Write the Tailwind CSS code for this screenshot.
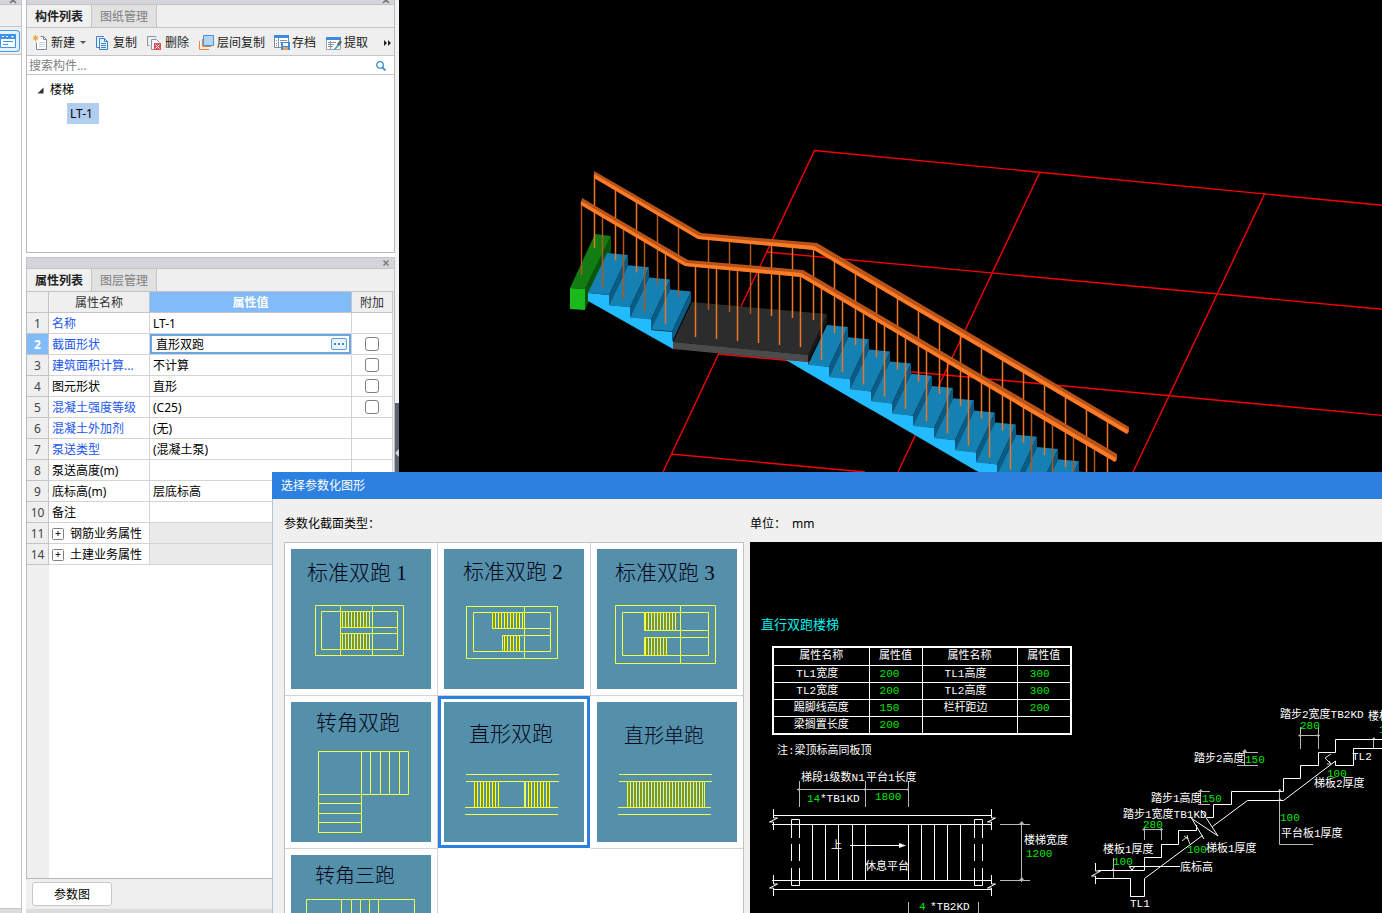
<!DOCTYPE html>
<html lang="zh-CN">
<head>
    <meta charset="UTF-8">
    <meta name="viewport" content="width=device-width, initial-scale=1.0">
    <title>选择参数化图形</title>
    <script src="https://cdn.jsdelivr.net/npm/@tailwindcss/browser@4"></script>
</head>
<body class="relative flex h-screen overflow-hidden bg-white font-['Noto_Sans','Noto_Sans_CJK_SC',sans-serif] text-xs text-[#222]">

    <!-- collapsed dock on the far left -->
    <aside class="flex w-[22px] shrink-0 flex-col border-r border-[#c4c4c8]">
        <div class="h-[5px] overflow-hidden border-b border-[#c4c4c8] bg-[#d4d4da] text-right"><svg class="ml-auto mr-1 block" width="8" height="4" viewBox="0 4 8 4"><path d="M1 1l6 6M7 1L1 7" stroke="#777" stroke-width="1.5"/></svg></div>
        <div class="h-[22px] border-b border-[#c4c4c8] bg-[#efefef]"></div>
        <div class="h-7 border-b border-[#c4c4c8] bg-[#efefef] pt-[3px]">
            <button type="button" aria-label="面板" class="flex h-[22px] w-5 items-center rounded-r border border-l-0 border-[#4a9be8] bg-[#e4f1fd]">
                <svg width="17" height="14" viewBox="0 0 17 14"><path d="M.5.5h15v13H.5z" fill="#fff" stroke="#3d94e8"/><path d="M0 0h16v5H0z" fill="#3d94e8"/><path d="M2 2h2v1H2zM6 2h2v1H6zM11 2h3l-1.500 2z" fill="#fff"/><path d="M3 7.500h10M3 10.500h5" stroke="#3d94e8"/></svg>
            </button>
        </div>
        <div class="flex-1 bg-white"></div>
        <div class="h-[5px] border-t border-[#c4c4c8] bg-[#dcdcdc]"></div>
    </aside>

    <div class="flex w-[373px] shrink-0 flex-col pl-1">
        <!-- component list -->
        <section class="flex h-[253px] shrink-0 flex-col border-x border-b border-[#b8b8bc]">
            <div class="h-[5px] shrink-0 border-b border-[#c4c4c8] bg-[#d4d4da]"><svg class="ml-auto mr-1 block" width="8" height="4" viewBox="0 4 8 4"><path d="M1 1l6 6M7 1L1 7" stroke="#777" stroke-width="1.5"/></svg></div>
            <div class="flex h-[23px] shrink-0 border-b border-[#c4c4c8] bg-[#efefef] leading-5">
                <button type="button" class="w-[65px] border-r border-[#c4c4c8] bg-[#f0f0f0] pt-[2px] font-bold">构件列表</button>
                <button type="button" class="w-[65px] border-r border-[#c4c4c8] bg-[#e1e1e1] pt-[2px] text-[#808080]">图纸管理</button>
            </div>
            <div class="flex h-7 shrink-0 items-center gap-[10px] border-b border-[#c4c4c8] bg-[#efefef] pt-[2px] pl-[6px]">
                <button type="button" class="flex items-center gap-[2px] whitespace-nowrap">
                    <svg width="16" height="16" viewBox="0 0 16 16"><path d="M7.500 1.500h3l3 3v10h-10v-7" fill="#fff" stroke="#7d8a94"/><path d="M10.500 1.500v3h3" fill="none" stroke="#7d8a94"/><path d="M6 7.500h6M6 9.500h6M6 11.500h6" stroke="#cdd3d8"/><path d="M.5 1l4 4M4.500 1l-4 4M2.500 0v6M0 3h5.500" stroke="#f29b28"/></svg>新建
                    <svg class="ml-[3px]" width="6" height="4" viewBox="0 0 6 4"><path d="M0 0h6L3 3z" fill="#555"/></svg>
                </button>
                <button type="button" class="-ml-px flex items-center gap-[2px] whitespace-nowrap">
                    <svg width="16" height="16" viewBox="0 0 16 16"><path d="M9 1.500H1.500v11H4" fill="none" stroke="#3b82d0"/><path d="M4.500 3.500h5l3 3v8h-8z" fill="#e6f1fc" stroke="#3b82d0"/><path d="M9.500 3.500v3h3" fill="none" stroke="#3b82d0"/><path d="M6 8.500h5M6 10.500h5M6 12.500h5" stroke="#3b82d0"/></svg>复制
                </button>
                <button type="button" class="flex items-center gap-[2px] whitespace-nowrap">
                    <svg width="16" height="16" viewBox="0 0 16 16"><path d="M2.500 10.500h-2v-9h8v1" fill="none" stroke="#8a949c"/><path d="M8 14.500H4.500v-10h5l3 3" fill="#fff" stroke="#8a949c"/><path d="M7 8h7v7H7z" fill="#d9505a"/><path d="M8.500 9.500l4 4M12.500 9.500l-4 4" stroke="#fff"/></svg>删除
                </button>
                <button type="button" class="flex items-center gap-[2px] whitespace-nowrap">
                    <svg width="16" height="16" viewBox="0 0 16 16"><path d="M.5 6v8.500H10M3.500 4v7.500H12" fill="none" stroke="#f08030"/><path d="M4.500.5h10v10h-10z" fill="#b5d6fa" stroke="#4a90e2"/></svg>层间复制
                </button>
                <button type="button" class="-ml-px flex items-center gap-[2px] whitespace-nowrap">
                    <svg width="16" height="16" viewBox="0 0 16 16"><path d="M.5.5h14v12H.5z" fill="#fff" stroke="#7d8a94"/><path d="M0 0h15v3H0z" fill="#3d8be0"/><path d="M4.500 3v9M2 5.500h1M2 8.500h1M2 10.500h1M6 5.500h7M6 7.500h2" stroke="#8a949c"/><path d="M7 7h9v8H7z" fill="#3d8be0"/><path d="M9 8h5v3H9z" fill="#fff"/><path d="M9 12h5v3H9z" fill="#e4a060"/></svg>存档
                </button>
                <button type="button" class="flex items-center gap-[2px] whitespace-nowrap">
                    <svg width="16" height="16" viewBox="0 0 16 16"><path d="M.5 2.500h14v12H.5z" fill="#fff" stroke="#9aa4ac"/><path d="M0 2h15v3H0z" fill="#3d8be0"/><path d="M2 7.500h8M2 9.500h6M2 11.500h5M4.500 6v8" stroke="#8a949c"/><path d="M8 14l4-5 1.500 1.500L9 15z" fill="#35a8c8"/><path d="M11 9l3-4 2 2-3 4z" fill="#666"/></svg>提取
                </button>
                <button type="button" aria-label="更多" class="ml-[6px]"><svg width="8" height="6" viewBox="0 0 8 6"><path d="M0 0l3 3-3 3zM4 0l3 3-3 3z" fill="#222"/></svg></button>
            </div>
            <label class="flex h-[19px] shrink-0 items-center border-b border-[#c4c4c8] bg-white pt-[2px] pl-[2px] pr-2">
                <input type="text" aria-label="搜索构件" placeholder="搜索构件..." class="min-w-0 flex-1 outline-none placeholder:text-[#808080]">
                <svg width="10" height="10" viewBox="0 0 10 10"><circle cx="4" cy="4" r="3.300" fill="none" stroke="#3c8fd0" stroke-width="1.300"/><path d="M6.500 6.500l3 3" stroke="#3c8fd0" stroke-width="1.800"/></svg>
            </label>
            <ul class="flex-1 bg-white pt-[5px] leading-5 text-black">
                <li>
                    <div class="flex items-center gap-[6px] pl-[10px]"><svg width="7" height="7" viewBox="0 0 7 7"><path d="M6.500.5v6h-6z" fill="#333"/></svg>楼梯</div>
                    <ul class="pt-[3px] pl-10"><li class="w-8 bg-[#b1cdef] pl-[3px] leading-[21px]">LT-1</li></ul>
                </li>
            </ul>
        </section>

        <!-- property list -->
        <section class="mt-1 flex min-h-0 flex-1 flex-col">
            <div class="flex h-3 shrink-0 items-center border border-[#c4c4c8] bg-[#d4d4da]"><svg class="ml-auto mr-1 block" width="8" height="8" viewBox="0 0 8 8"><path d="M1.500 1.500l5 5M6.500 1.500l-5 5" stroke="#777" stroke-width="1.400"/></svg></div>
            <div class="flex h-[23px] shrink-0 border border-t-0 border-[#c4c4c8] bg-[#efefef] leading-5">
                <button type="button" class="w-[65px] border-r border-[#c4c4c8] bg-[#f0f0f0] pt-[2px] font-bold">属性列表</button>
                <button type="button" class="w-[65px] border-r border-[#c4c4c8] bg-[#e1e1e1] pt-[2px] text-[#808080]">图层管理</button>
            </div>
            <div class="flex min-h-0 flex-1 flex-col border-x border-b border-[#b8b8bc] bg-[#efefef] pr-[1px]">
                <table class="w-[366px] table-fixed border-separate border-spacing-0 bg-white text-black [&_td]:h-[21px] [&_td]:border-r [&_td]:border-b [&_td]:border-[#d4d4d4] [&_td]:p-0 [&_td]:pt-[2px] [&_td]:pl-[3px] [&_td]:leading-[18px] [&_td]:whitespace-nowrap [&_td:last-child]:p-0 [&_th]:h-[21px] [&_th]:border-r [&_th]:border-b [&_th]:border-[#c4c4c8] [&_th]:p-0 [&_th]:pt-[2px] [&_th]:leading-[18px] [&_th]:font-normal">
                    <colgroup><col class="w-[22px]"><col class="w-[101px]"><col class="w-[202px]"><col class="w-[41px]"></colgroup>
                    <thead class="bg-[#efefef] text-[#333]">
                        <tr><th></th><th>属性名称</th><th class="bg-[#82bbfa] text-white"><b>属性值</b></th><th>附加</th></tr>
                    </thead>
                    <tbody>
                        <tr><th class="bg-[#efefef] text-[#444]">1</th><td class="text-[#1a56f0]">名称</td><td>LT-1</td><td></td></tr>
                        <tr><th class="bg-[#82bbfa] text-white"><b>2</b></th><td class="text-[#1a56f0]">截面形状</td>
                            <td class="p-0!"><div class="flex h-5 items-center border-2 border-[#6aa5e4] bg-white pr-[2px] pl-1"><input type="text" aria-label="截面形状" value="直形双跑" class="min-w-0 flex-1 pt-[2px] outline-none"><button type="button" aria-label="选择" class="flex h-3 w-4 items-center justify-center gap-[2px] rounded-xs border border-[#5a9fd8] bg-[#e8f3fc]"><i class="size-[2px] bg-[#3d8bc8]"></i><i class="size-[2px] bg-[#3d8bc8]"></i><i class="size-[2px] bg-[#3d8bc8]"></i></button></div></td>
                            <td><input type="checkbox" aria-label="附加 截面形状" class="mx-auto block size-[14px] appearance-none rounded-[3px] border border-[#808080] bg-white"></td></tr>
                        <tr><th class="bg-[#efefef] text-[#444]">3</th><td class="text-[#1a56f0]">建筑面积计算...</td><td>不计算</td><td><input type="checkbox" aria-label="附加 建筑面积计算" class="mx-auto block size-[14px] appearance-none rounded-[3px] border border-[#808080] bg-white"></td></tr>
                        <tr><th class="bg-[#efefef] text-[#444]">4</th><td>图元形状</td><td>直形</td><td><input type="checkbox" aria-label="附加 图元形状" class="mx-auto block size-[14px] appearance-none rounded-[3px] border border-[#808080] bg-white"></td></tr>
                        <tr><th class="bg-[#efefef] text-[#444]">5</th><td class="text-[#1a56f0]">混凝土强度等级</td><td>(C25)</td><td><input type="checkbox" aria-label="附加 混凝土强度等级" class="mx-auto block size-[14px] appearance-none rounded-[3px] border border-[#808080] bg-white"></td></tr>
                        <tr><th class="bg-[#efefef] text-[#444]">6</th><td class="text-[#1a56f0]">混凝土外加剂</td><td>(无)</td><td></td></tr>
                        <tr><th class="bg-[#efefef] text-[#444]">7</th><td class="text-[#1a56f0]">泵送类型</td><td>(混凝土泵)</td><td></td></tr>
                        <tr><th class="bg-[#efefef] text-[#444]">8</th><td>泵送高度(m)</td><td></td><td></td></tr>
                        <tr><th class="bg-[#efefef] text-[#444]">9</th><td>底标高(m)</td><td>层底标高</td><td></td></tr>
                        <tr><th class="bg-[#efefef] text-[#444]">10</th><td>备注</td><td></td><td></td></tr>
                        <tr><th class="bg-[#efefef] text-[#444]">11</th><td><div class="flex items-center gap-[6px]"><button type="button" aria-label="展开"><svg class="block" width="12" height="12" viewBox="0 0 12 12"><rect x=".5" y=".5" width="11" height="11" rx="1" fill="#fff" stroke="#808080"/><path d="M3.500 5.500h5M6 3v5" stroke="#222"/></svg></button>钢筋业务属性</div></td><td class="bg-[#eaeaea]"></td><td class="bg-[#eaeaea]"></td></tr>
                        <tr><th class="bg-[#efefef] text-[#444]">14</th><td><div class="flex items-center gap-[6px]"><button type="button" aria-label="展开"><svg class="block" width="12" height="12" viewBox="0 0 12 12"><rect x=".5" y=".5" width="11" height="11" rx="1" fill="#fff" stroke="#808080"/><path d="M3.500 5.500h5M6 3v5" stroke="#222"/></svg></button>土建业务属性</div></td><td class="bg-[#eaeaea]"></td><td class="bg-[#eaeaea]"></td></tr>
                    </tbody>
                </table>
                <div class="ml-[22px] flex-1 bg-white"></div>
            </div>
            <div class="flex h-[30px] shrink-0 items-center bg-[#efefef] pl-[6px]">
                <button type="button" class="h-6 w-20 rounded-[3px] border border-[#c8c8c8] bg-white pt-[2px] text-black">参数图</button>
            </div>
            <div class="h-1 shrink-0 bg-[#dcdcde]"></div>
        </section>
    </div>

    <!-- splitter -->
    <div class="flex w-1 shrink-0 items-center bg-[#f2f2f2] pb-2">
        <button type="button" aria-label="收起" class="flex h-[100px] w-1 items-center bg-[#5b6470]"><svg width="4" height="8" viewBox="0 0 4 8"><path d="M4 0v8L0 4z" fill="#d0d4d8"/></svg></button>
    </div>

    <!-- 3D view -->
    <main class="min-w-0 flex-1 bg-black">
        <svg class="block size-full" viewBox="399 0 983 913" preserveAspectRatio="xMinYMin slice">
            <path d="M1400 207L814.500 150.500 663 472M1040 172L898 472M1265 193L1133 472M767 252L1400 311M718 354L1400 417M671 454L865 472" fill="none" stroke="#f80000" stroke-width="1.400"/>
            <path d="M611 236L585 289v21l26-58z" fill="#0a560a"/>
            <path d="M595 234l16 2-26 53-15-1z" fill="#127d12"/>
            <path d="M570 288l15 1v21l-15-1z" fill="#1aba1a"/>
            <path d="M588 293l21 2v10l21 2v10l21 2v11l22 2v17L588 301zM786 360l22 2v11z" fill="#22bbff"/>
            <g id="steps"></g>
            <path d="M827 314v8l-19 40v-8z" fill="#181818"/>
            <path d="M692 302l135 12-19 41-135-13z" fill="#2c2c2c"/>
            <path d="M673 342l135 13v7l-135-13z" fill="#4b4b4b"/>
            <g id="posts"></g>
            <path d="M594 171l107 62 116 10 312 184v5l-2 2L814 250l-116-11-104-61z" fill="#b8541a"/>
            <path d="M594 174l105 62 115 10 314 184-1 4L814 250l-116-11-104-61z" fill="#ff7b25"/>
            <path d="M582 198l106 62 115 10 314 184v6l-2 2L801 277l-116-11-104-61z" fill="#b8541a"/>
            <path d="M581 201l105 62 115 10 315 185-1 4L801 277l-116-11-104-61z" fill="#ff7b25"/>
        </svg>
    </main>

    <!-- parametric shape dialog -->
    <div role="dialog" aria-labelledby="dialogTitle" class="absolute top-[472px] right-0 bottom-0 left-[272px] flex flex-col bg-[#f0f0f0] text-black">
        <h1 id="dialogTitle" class="h-[27px] shrink-0 bg-[#2c80e0] pl-[9px] leading-[27px] text-white">选择参数化图形</h1>
        <div class="flex min-h-0 flex-1 gap-[6px] border-l border-[#b4c4dc] pl-[11px]">
            <div class="flex w-[460px] shrink-0 flex-col">
                <h2 class="h-[43px] shrink-0 leading-[50px]">参数化截面类型：</h2>
                <div class="grid min-h-0 flex-1 auto-rows-[153px] grid-cols-[153px_153px_152px] overflow-hidden border border-b-0 border-[#c0c0c0] bg-white text-[21px] [&_svg]:block [&_svg]:bg-[#5490aa] [&_svg]:font-['Liberation_Serif','Noto_Sans_CJK_SC',serif] [&_text]:font-light">
                    <button type="button" class="border-r border-b border-[#d4d4d4] pl-[6px]">
                        <svg width="140" height="140"><defs><pattern id="treads" width="6" height="6" patternUnits="userSpaceOnUse"><path d="M1 0h2v6H1z" fill="#8a9a10"/><path d="M0 0h1v6H0zM3 0h1v6H3z" fill="#f2ff50"/></pattern></defs>
                            <text x="16" y="31" fill="#06061c">标准双跑 1</text><path d="M49 62h30v16H49zM49 84h30v16H49z" fill="url(#treads)"/><path d="M24.500 56.500h88v50h-88zM30.500 62.500h76v38h-76zM49.500 56v50M81.500 56v50M49 78.500h57M49 84.500h57" fill="none" stroke="#f0ff46"/></svg>
                    </button>
                    <button type="button" class="border-r border-b border-[#d4d4d4] pl-[6px]">
                        <svg width="140" height="140"><text x="19" y="30" fill="#06061c">标准双跑 2</text><path d="M48 63h32v16H48zM58 86h20v16H58z" fill="url(#treads)"/><path d="M22.500 57.500h91v52h-91zM29.500 63.500h77v39h-77zM80.500 57v52M48.500 63v16.500H106M106 86.500H58.500v16" fill="none" stroke="#f0ff46"/></svg>
                    </button>
                    <button type="button" class="border-b border-[#d4d4d4] pl-[6px]">
                        <svg width="140" height="140"><text x="18" y="31" fill="#06061c">标准双跑 3</text><path d="M48 63h32v18H48zM48 88h22v18H48z" fill="url(#treads)"/><path d="M18.500 56.500h100v58h-100zM25.500 63.500h86v43h-86zM83.500 56v58M47.500 63v18.500H111M111 88.500H47.500V106" fill="none" stroke="#f0ff46"/></svg>
                    </button>
                    <button type="button" class="border-r border-b border-[#d4d4d4] pl-[6px]">
                        <svg width="140" height="140"><text x="25" y="28" fill="#06061c">转角双跑</text><path d="M27.500 49.500h90v43h-90zM27.500 92v38.500h43V49M79.500 49v43M89.500 49v43M98.500 49v43M108.500 49v43M27 101.500h43M27 111.500h43M27 120.500h43" fill="none" stroke="#f0ff46"/></svg>
                    </button>
                    <button type="button" aria-pressed="true" class="mr-px mb-px border-3 border-[#2c80e0] pl-[3px]">
                        <svg width="140" height="140"><text x="25" y="39" fill="#06061c">直形双跑</text><path d="M28 80h28v25H28zM80 80h28v25H80z" fill="url(#treads)"/><path d="M22 72.500h93M22 79.500h93M21 105.500h93M21 112.500h93M54.500 79v26M80.500 79v26" stroke="#f0ff46"/></svg>
                    </button>
                    <button type="button" class="border-b border-[#d4d4d4] pl-[6px]">
                        <svg width="140" height="140"><text x="27" y="41" font-size="20" fill="#06061c">直形单跑</text><path d="M28 80h80v25H28z" fill="url(#treads)"/><path d="M22 72.500h93M22 79.500h93M21 105.500h93M21 112.500h93M107.500 79v26" stroke="#f0ff46"/></svg>
                    </button>
                    <button type="button" class="border-r border-b border-[#d4d4d4] pl-[6px]">
                        <svg width="140" height="140"><text x="24" y="28" font-size="20" fill="#06061c">转角三跑</text><path d="M15.500 130V44.500h108V130M50.500 44v40M60.500 44v40M69.500 44v40M78.500 44v40M87.500 44v40" fill="none" stroke="#f0ff46"/></svg>
                    </button>
                </div>
            </div>

            <div class="flex min-w-0 flex-1 flex-col">
                <p class="h-[43px] shrink-0 leading-[50px]">单位：<span class="ml-[6px]">mm</span></p>
                <div class="relative min-h-0 flex-1 overflow-hidden bg-black pl-[11px] font-['Liberation_Mono','Noto_Sans_CJK_SC',monospace] text-[11px] text-white">
                    <h3 class="pt-[75px] text-[13px] leading-[18px] text-[#00f0f0]">直行双跑楼梯</h3>
                    <table class="mt-[11px] ml-[11px] w-[298px] table-fixed border-collapse border-2 border-white text-center leading-4 [&_td]:h-[17px] [&_td]:border [&_td]:border-white [&_td]:p-0 [&_th]:h-[18px] [&_th]:border [&_th]:border-white [&_th]:p-0 [&_th]:font-normal">
                        <colgroup><col class="w-[96px]"><col class="w-[53px]"><col class="w-[95px]"><col class="w-[54px]"></colgroup>
                        <tr><th>属性名称</th><th>属性值</th><th>属性名称</th><th>属性值</th></tr>
                        <tr><td class="pr-2!">TL1宽度</td><td class="pr-3! text-[#00e800]">200</td><td class="pr-2!">TL1高度</td><td class="pr-2! text-[#00e800]">300</td></tr>
                        <tr><td class="pr-2!">TL2宽度</td><td class="pr-3! text-[#00e800]">200</td><td class="pr-2!">TL2高度</td><td class="pr-2! text-[#00e800]">300</td></tr>
                        <tr><td>踢脚线高度</td><td class="pr-3! text-[#00e800]">150</td><td class="pr-2!">栏杆距边</td><td class="pr-2! text-[#00e800]">200</td></tr>
                        <tr><td>梁搁置长度</td><td class="pr-3! text-[#00e800]">200</td><td></td><td></td></tr>
                    </table>
                    <p class="mt-2 pl-4 leading-4">注:梁顶标高同板顶</p>

                    <svg class="absolute inset-0 size-full" viewBox="750 542 632 371" preserveAspectRatio="xMinYMin slice">
                        <!-- dimension lines -->
                        <path d="M799.500 781v26M865.500 781v26M908.500 781v26M797 789.500h112M1000 824.500h30M1000 880.500h30M1021.500 822v60M908.500 902v20M978.500 902v20M1113.500 858v21M1144.500 828v12M1161.500 828v12M1143 829.500h20M1198 791.500h12M1198 804.500h12M1200.500 790v15M1243 752.500h15M1237 765.500h21M1244.500 750v16M1300.500 727v22M1318.500 727v22M1299 735.500h21M1373.500 738v11M1279.500 789v55.500H1313" fill="none" stroke="#b8b8b8"/>
                        <path d="M797 789.500l3-2v4zM863 789.500l3-2v4zM906 789.500l3-2v4zM1019 824l3-3 2 3zM1019 880l3-3 2 3zM1111 871l2-3 3 3zM1277 792l3-3 2 3zM1277 801l3-3 2 3zM1371 740l3-3 2 3zM1298 735.500l3-2v4zM1316 735.500l3-2v4zM1242 752l3-3 2 3zM1198 792l3-3 2 3zM1142 829.500l3-2v4zM1159 829.500l3-2v4z" fill="#b8b8b8"/>
                        <!-- plan -->
                        <path d="M773 815.500h219M772 824.500h220M772 880.500h220M773 889.500h219M773.500 809v9h4l-8 4h4v8M773.500 875v9h4l-8 4h4v8M991.500 809v9h4l-8 4h4v8M991.500 875v9h4l-8 4h4v8" fill="none" stroke="#fff"/>
                        <path d="M791.500 838v-18.500h8V838M791.500 844v17M799.500 844v17M791.500 868v17.500h8V868M974.500 838v-18.500h8V838M974.500 844v17M982.500 844v17M974.500 868v17.500h8V868" fill="none" stroke="#fff"/>
                        <path d="M812.500 824v56M825.500 824v56M838.500 824v56M852.500 824v56M865.500 824v56M908.500 824v56M921.500 824v56M934.500 824v56M947.500 824v56M960.500 824v56M850 845.500h50" stroke="#fff"/>
                        <path d="M899 843l7 2.500-7 2.500z" fill="#fff"/>
                        <!-- section -->
                        <path d="M1098 870.500h46.500v-13h17v-13h17v-14h18V825M1207 817.500h6.500v-13h18v-13h52v-13h17v-13h18v-13h17v-13H1400M1096 878.500h34.500v18h14v-18l58-43M1212.500 826.500l35-26h36l52-39.500v4.500h18v-17H1400M1191 818l27 18-17-26M1192 819l12 20M1095.500 863v8h5l-9 5h4v8M1129 866.500h51M1129 866l3 4 3-4" fill="none" stroke="#fff"/>
                        <path d="M1182 841l5-4 3 7M1184 836l4 3-1-4M1325 758l6-4M1325 758l6 6M1329 761l2 3-4 0" fill="none" stroke="#ddd"/>
                        <g fill="#fff">
                            <text x="801" y="781">梯段1级数N1</text><text x="866" y="781">平台1长度</text><text x="820" y="802">*TB1KD</text>
                            <text x="831" y="849">上</text><text x="865" y="870">休息平台</text><text x="1024" y="844">楼梯宽度</text><text x="930" y="910">*TB2KD</text>
                            <text x="1280" y="718">踏步2宽度TB2KD</text><text x="1368" y="720">楼板2厚度</text><text x="1194" y="762">踏步2高度</text><text x="1352" y="760">TL2</text>
                            <text x="1314" y="787">梯板2厚度</text><text x="1151" y="802">踏步1高度</text><text x="1123" y="818">踏步1宽度TB1KD</text><text x="1281" y="837">平台板1厚度</text>
                            <text x="1206" y="852">梯板1厚度</text><text x="1103" y="853">楼板1厚度</text><text x="1180" y="871">底标高</text><text x="1130" y="907">TL1</text>
                        </g>
                        <g fill="#00e800">
                            <text x="807" y="802">14</text><text x="875" y="800">1800</text><text x="1026" y="857">1200</text><text x="919" y="910">4</text>
                            <text x="1300" y="729">280</text><text x="1379" y="733">100</text><text x="1245" y="763">150</text><text x="1327" y="777">100</text><text x="1202" y="802">150</text>
                            <text x="1280" y="821">100</text><text x="1143" y="828">280</text><text x="1187" y="853">100</text><text x="1113" y="865">100</text>
                        </g>
                    </svg>
                </div>
            </div>
        </div>
    </div>

    <script>
        const DARK = '#b3561e';
        const BRIGHT = '#ee7426';

        // one tread and the riser below it, (x, y) is the front left corner
        function step(x, y) {
            return `<path d="M${x} ${y}l19-40 21 2-19 40z" fill="#1581b2"/>` +
                `<path d="M${x + 21} ${y + 2}l19-40v10l-19 40.500z" fill="#0a5c86"/>`;
        }

        let steps = '';
        for (let i = 0; i < 4; i++) steps += step(588 + i * 21, 293 + i * 12.2);
        for (let i = 0; i < 13; i++) {
            const x = 808 + i * 21, y = 365 + i * 12.2;
            steps += `<path d="M${x} ${y - 1}l21.500 3v18.500l-21.500-12.500z" fill="#22bbff"/>` + step(x, y);
        }
        document.getElementById('steps').innerHTML = steps;

        function post(x, top, bottom, color) {
            return `<path d="M${x + 0.5} ${top}V${bottom}" stroke="${color}" stroke-width="1.500"/>`;
        }

        let posts = '';
        for (let i = 0; i < 5; i++) {
            posts += post(594 + i * 21, 175 + i * 12.4, 248 + i * 12.2, i < 3 ? BRIGHT : DARK);
            posts += post(581 + i * 21, 202 + i * 12.4, 275 + i * 12.2, i < 4 ? DARK : BRIGHT);
        }
        for (let i = 0; i < 6; i++) {
            posts += post(708 + i * 21, 238 + i * 2, 310 + i * 2, i < 3 ? DARK : BRIGHT);
            posts += post(695 + i * 21, 265 + i * 2, 337 + i * 2, BRIGHT);
        }
        for (let i = 0; i < 14; i++) {
            posts += post(834 + i * 21, 260 + i * 12.3, 333 + i * 12.2, BRIGHT);
            posts += post(821 + i * 21, 287 + i * 12.3, 360 + i * 12.2, i < 10 ? BRIGHT : DARK);
        }
        document.getElementById('posts').innerHTML = posts;
    </script>
</body>
</html>
